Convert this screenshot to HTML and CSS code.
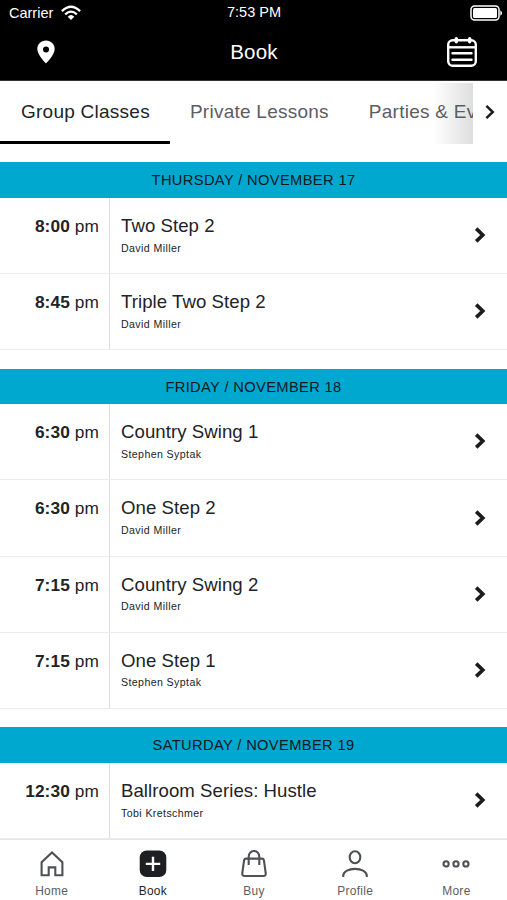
FILE: index.html
```html
<!DOCTYPE html>
<html lang="en">
<head>
<meta charset="utf-8">
<title>Book</title>
<link rel="stylesheet" href="styles.css">
</head>
<body>
<svg class="defs" aria-hidden="true"><symbol id="chevron" viewBox="0 0 12 18"><path d="M2.2 2.6 8.8 9 2.2 15.4" fill="none" stroke="#1b1c1e" stroke-width="3.6"/></symbol></svg>
<div class="app">
<header class="header">
  <div class="status">
    <div class="carrier"><span>Carrier</span>
      <svg class="wifi" viewBox="0 0 20 16" fill="none" stroke="#fff" stroke-width="2.3"><path d="M.9 6.1Q10-2.6 19.1 6.1M4.2 9.3Q10 3.9 15.8 9.3"/><path d="M6.7 11.7Q10 8.3 13.3 11.7L10 15z" fill="#fff" stroke="none"/></svg>
    </div>
    <span class="clock">7:53 PM</span>
    <svg class="battery" viewBox="0 0 33 16"><rect x="1" y="1" width="28" height="14" rx="3.5" fill="none" stroke="#fff" stroke-width="1.5"/><rect x="3" y="3" width="24" height="10" rx="1.5" fill="#fff"/><path d="M30.3 5.2Q34 8 30.3 10.8z" fill="#fff"/></svg>
  </div>
  <div class="titlebar">
    <svg class="pin" viewBox="0 0 18 24"><path fill="#fff" fill-rule="evenodd" d="M9 .5C4 .5.3 4.1.3 9c0 5.8 8.7 14.5 8.7 14.5S17.7 14.8 17.7 9C17.7 4.1 14 .5 9 .5zM9 6.5a3 3 0 1 1 0 6 3 3 0 0 1 0-6z"/></svg>
    <h1>Book</h1>
    <svg class="calendar" viewBox="0 0 32 32" fill="none" stroke="#fff" stroke-width="2.4"><rect x="2.2" y="4.2" width="27.6" height="25.6" rx="4.5"/><path d="M2 11.3h28"/><path d="M6.5 17.3h19M6.5 23.7h19" stroke-linecap="round"/><path d="M10.3 2.6v3.1M23.7 2.6v3.1" stroke-width="3.4" stroke-linecap="round"/></svg>
  </div>
</header>
<nav class="tabs">
  <div class="tablist">
    <span class="tab active">Group Classes</span><span class="tab">Private Lessons</span><span class="tab">Parties &amp; Events</span>
  </div>
  <div class="next"><svg viewBox="0 0 12 16"><path d="M2.4 1.8 8.8 8l-6.4 6.2" fill="none" stroke="#1b1c1e" stroke-width="2.5"/></svg></div>
</nav>
<main class="schedule">
  <section>
    <h2>THURSDAY / NOVEMBER 17</h2>
    <div class="row"><div class="time"><b>8:00</b> pm</div><div class="info"><h3>Two Step 2</h3><p>David Miller</p></div><svg class="chev"><use href="#chevron"/></svg></div>
    <div class="row"><div class="time"><b>8:45</b> pm</div><div class="info"><h3>Triple Two Step 2</h3><p>David Miller</p></div><svg class="chev"><use href="#chevron"/></svg></div>
  </section>
  <section>
    <h2>FRIDAY / NOVEMBER 18</h2>
    <div class="row"><div class="time"><b>6:30</b> pm</div><div class="info"><h3>Country Swing 1</h3><p>Stephen Syptak</p></div><svg class="chev"><use href="#chevron"/></svg></div>
    <div class="row"><div class="time"><b>6:30</b> pm</div><div class="info"><h3>One Step 2</h3><p>David Miller</p></div><svg class="chev"><use href="#chevron"/></svg></div>
    <div class="row"><div class="time"><b>7:15</b> pm</div><div class="info"><h3>Country Swing 2</h3><p>David Miller</p></div><svg class="chev"><use href="#chevron"/></svg></div>
    <div class="row"><div class="time"><b>7:15</b> pm</div><div class="info"><h3>One Step 1</h3><p>Stephen Syptak</p></div><svg class="chev"><use href="#chevron"/></svg></div>
  </section>
  <section>
    <h2>SATURDAY / NOVEMBER 19</h2>
    <div class="row"><div class="time"><b>12:30</b> pm</div><div class="info"><h3>Ballroom Series: Hustle</h3><p>Tobi Kretschmer</p></div><svg class="chev"><use href="#chevron"/></svg></div>
  </section>
</main>
<footer class="bottom">
  <div class="item"><svg viewBox="0 0 28 28"><path d="M3.6 25.2V12.3L14 2.4l10.4 9.9v12.9h-7.1v-7.8h-6.6v7.8z"/></svg><span>Home</span></div>
  <div class="item current"><svg viewBox="0 0 28 28"><rect x=".7" y=".5" width="26.6" height="26.6" rx="7" fill="#1d1f22" stroke="none"/><path d="M14 6.7v14.4M6.8 13.9h14.4" stroke="#fff" stroke-width="2.4"/></svg><span>Book</span></div>
  <div class="item"><svg viewBox="0 0 28 28"><path d="M6 8.6h16q1.6 0 1.9 1.6l1.8 13q.3 2.8-2.3 2.8H4.6Q2 26 2.3 23.2l1.8-13Q4.4 8.6 6 8.6zM8.7 15V6.8C8.7-.9 19.3-.9 19.3 6.8V15"/></svg><span>Buy</span></div>
  <div class="item"><svg viewBox="0 0 28 28"><ellipse cx="14" cy="7.2" rx="5.3" ry="6"/><path d="M2.2 27v-1.2c0-9.3 23.6-9.3 23.6 0V27"/></svg><span>Profile</span></div>
  <div class="item"><svg viewBox="0 0 28 28"><circle cx="4.1" cy="13.9" r="2.6"/><circle cx="14" cy="13.9" r="2.6"/><circle cx="23.9" cy="13.9" r="2.6"/></svg><span>More</span></div>
</footer>
</div>
</body>
</html>
```
FILE: styles.css
```css
* { box-sizing: border-box; margin: 0; padding: 0; }
body { font-family: "Liberation Sans", Arial, sans-serif; background: #fff; color: #212326; }
svg { display: block; flex: none; }
.defs { display: none; }
.app { width: 507px; height: 900px; overflow: hidden; display: flex; flex-direction: column; }

.header { height: 80.5px; flex: none; background: #000; color: #fff; border-bottom: 1px solid #333; }
.status { height: 25px; display: grid; grid-template-columns: 1fr auto 1fr; align-items: center; font-size: 14.5px; padding: 0 4px 0 9px; }
.carrier { display: flex; align-items: center; gap: 8px; }
.wifi { width: 20px; height: 16px; }
.clock { margin: -2px 4px 0 0; }
.battery { width: 33px; height: 16px; justify-self: end; }
.titlebar { height: 54px; display: grid; grid-template-columns: 1fr auto 1fr; align-items: center; padding: 0 29px 0 37px; }
.pin { width: 18px; height: 24px; }
.titlebar h1 { font-size: 20.5px; font-weight: 400; letter-spacing: .2px; margin-left: -7px; }
.calendar { width: 32px; height: 32px; justify-self: end; }

.tabs { height: 63.5px; flex: none; display: flex; }
.tablist { flex: 1; min-width: 0; overflow: hidden; display: flex; background: linear-gradient(to right, #fff, #dedede) right bottom / 40px 61.5px no-repeat; }
.tab { flex: none; padding: 19px 20px 0 20px; font-size: 19px; line-height: 24px; letter-spacing: .25px; color: #5b5d62; white-space: nowrap; }
.tab.active { color: #212326; border-bottom: 3.5px solid #000; padding-left: 21px; }
.next { width: 34.5px; display: flex; align-items: center; padding-left: 11.5px; }
.next svg { width: 12px; height: 16px; }

.schedule { flex: 1; min-height: 0; overflow: hidden; padding-top: 18.3px; }
section { margin-bottom: 18.4px; }
h2 { height: 35.7px; line-height: 36px; background: #00a8d0; text-align: center; font-size: 14.7px; font-weight: 400; letter-spacing: .35px; color: #101820; }
.row { height: 76.15px; display: flex; border-bottom: 1px solid #ececec; }
.time { width: 110px; border-right: 1.5px solid #dedee1; padding: 18px 10px 0 0; text-align: right; font-size: 17.3px; line-height: 20.5px; letter-spacing: .1px; white-space: nowrap; }
.info { flex: 1; padding: 17px 0 0 11px; }
h3 { font-size: 18.6px; line-height: 22px; font-weight: 400; letter-spacing: .06px; }
.info p { font-size: 10.6px; line-height: 12px; letter-spacing: .4px; margin-top: 4.6px; }
.chev { width: 12px; height: 18px; align-self: center; margin: -1px 21px 0 0; }

.bottom { height: 61px; flex: none; display: grid; grid-template-columns: repeat(5, 101.2px); justify-content: end; border-top: 1px solid #e6e6e6; background: #fff; }
.item { display: flex; flex-direction: column; align-items: center; padding-top: 10px; font-size: 11.9px; line-height: 14px; letter-spacing: .3px; color: #5b5d62; gap: 6px; }
.item svg { width: 28px; height: 28px; fill: none; stroke: #4e5055; stroke-width: 2.1; }
.item.current { color: #1d1f22; }
```
